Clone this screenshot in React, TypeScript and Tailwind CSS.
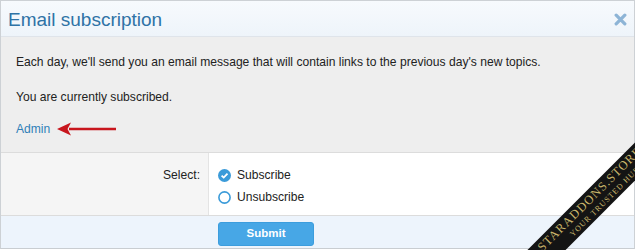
import React from 'react';

const Radio = ({ checked }: { checked: boolean }) =>
    checked ? (
        <svg width="13" height="13" viewBox="0 0 13 13">
            <circle cx="6.5" cy="6.5" r="6.5" fill="#3b9bd9" />
            <path d="M3.6 6.6 L5.7 8.6 L9.5 4.6" fill="none" stroke="#fff" strokeWidth="1.8" />
        </svg>
    ) : (
        <svg width="13" height="13" viewBox="0 0 13 13">
            <circle cx="6.5" cy="6.5" r="5.6" fill="#fff" stroke="#3b9bd9" strokeWidth="1.6" />
        </svg>
    );

const App = () => {
    return (
        <div
            className="relative w-[635px] h-[250px] overflow-hidden bg-white"
            style={{ fontFamily: '"Liberation Sans", Arial, sans-serif' }}
        >
            <div className="flex flex-col h-[249px] border border-[#cdd1d5] border-b-[#c9cdd1]">
                {/* header */}
                <header className="flex items-center justify-between h-[36px] pl-[7px] pr-[7px] bg-gradient-to-b from-[#f7fafd] to-[#eef4fa] border-b border-[#dfe4ea]">
                    <h2 className="text-[19px] leading-none text-[#2f73a6] pt-[1px]">Email subscription</h2>
                    <svg width="13" height="13" viewBox="0 0 12 12" className="mt-[1px]">
                        <path d="M2 2 L10 10 M10 2 L2 10" stroke="#8db4d6" strokeWidth="3" strokeLinecap="round" />
                    </svg>
                </header>

                {/* message */}
                <section className="h-[116px] bg-[#eeeeee] px-[15px] pt-[15px] text-[12.1px] text-[#222] border-b border-[#dcdcdc]">
                    <p className="leading-[20px]">
                        Each day, we'll send you an email message that will contain links to the previous day's new topics.
                    </p>
                    <p className="leading-[20px] mt-[15px]">You are currently subscribed.</p>
                    <div className="flex items-center mt-[12px] h-[20px]">
                        <a href="" className="text-[#2f7fb8]">Admin</a>
                        <svg width="62" height="14" viewBox="0 0 62 14" className="ml-[7px]">
                            <path d="M12 7 L59 7" stroke="#c8161d" strokeWidth="2.6" />
                            <path d="M0 7 L14 0.5 L10.5 7 L14 13.5 Z" fill="#c8161d" />
                        </svg>
                    </div>
                </section>

                {/* form row */}
                <section className="flex h-[63px] border-b border-[#dcdcdc]">
                    <div className="w-[208px] bg-[#f5f5f5] border-r border-[#e4e4e4] text-right pr-[8px] pt-[13px] text-[12.1px] text-[#222] leading-[18px]">
                        Select:
                    </div>
                    <div className="flex-1 pl-[9px] pt-[13px] text-[12.1px] text-[#222]">
                        <label className="flex items-center gap-[6px] leading-[18px]">
                            <Radio checked />
                            Subscribe
                        </label>
                        <label className="flex items-center gap-[6px] leading-[18px] mt-[4px]">
                            <Radio checked={false} />
                            Unsubscribe
                        </label>
                    </div>
                </section>

                {/* footer */}
                <footer className="flex-1 bg-[#edf4fc] pl-[217px] pt-[4px]">
                    <button className="w-[96px] h-[24px] rounded-[3px] bg-[#47a7e6] text-white text-[11.5px] font-bold border border-[#3c9ddd]">
                        Submit
                    </button>
                </footer>
            </div>

            {/* watermark ribbon */}
            <div className="absolute left-[495px] top-[188px] w-[200px] h-[27px] bg-[#141414] -rotate-45 flex flex-col items-center justify-center leading-none text-[#c9b56a]">
                <span className="text-[12.5px] tracking-[1px] mr-[4px]" style={{ fontFamily: '"Liberation Serif", serif' }}>STARADDONS.STORE</span>
                <span className="text-[8px] tracking-[1px] mt-[2px] ml-[14px]" style={{ fontFamily: '"Liberation Serif", serif' }}>YOUR TRUSTED HUB</span>
            </div>
        </div>
    );
};

export default App;
